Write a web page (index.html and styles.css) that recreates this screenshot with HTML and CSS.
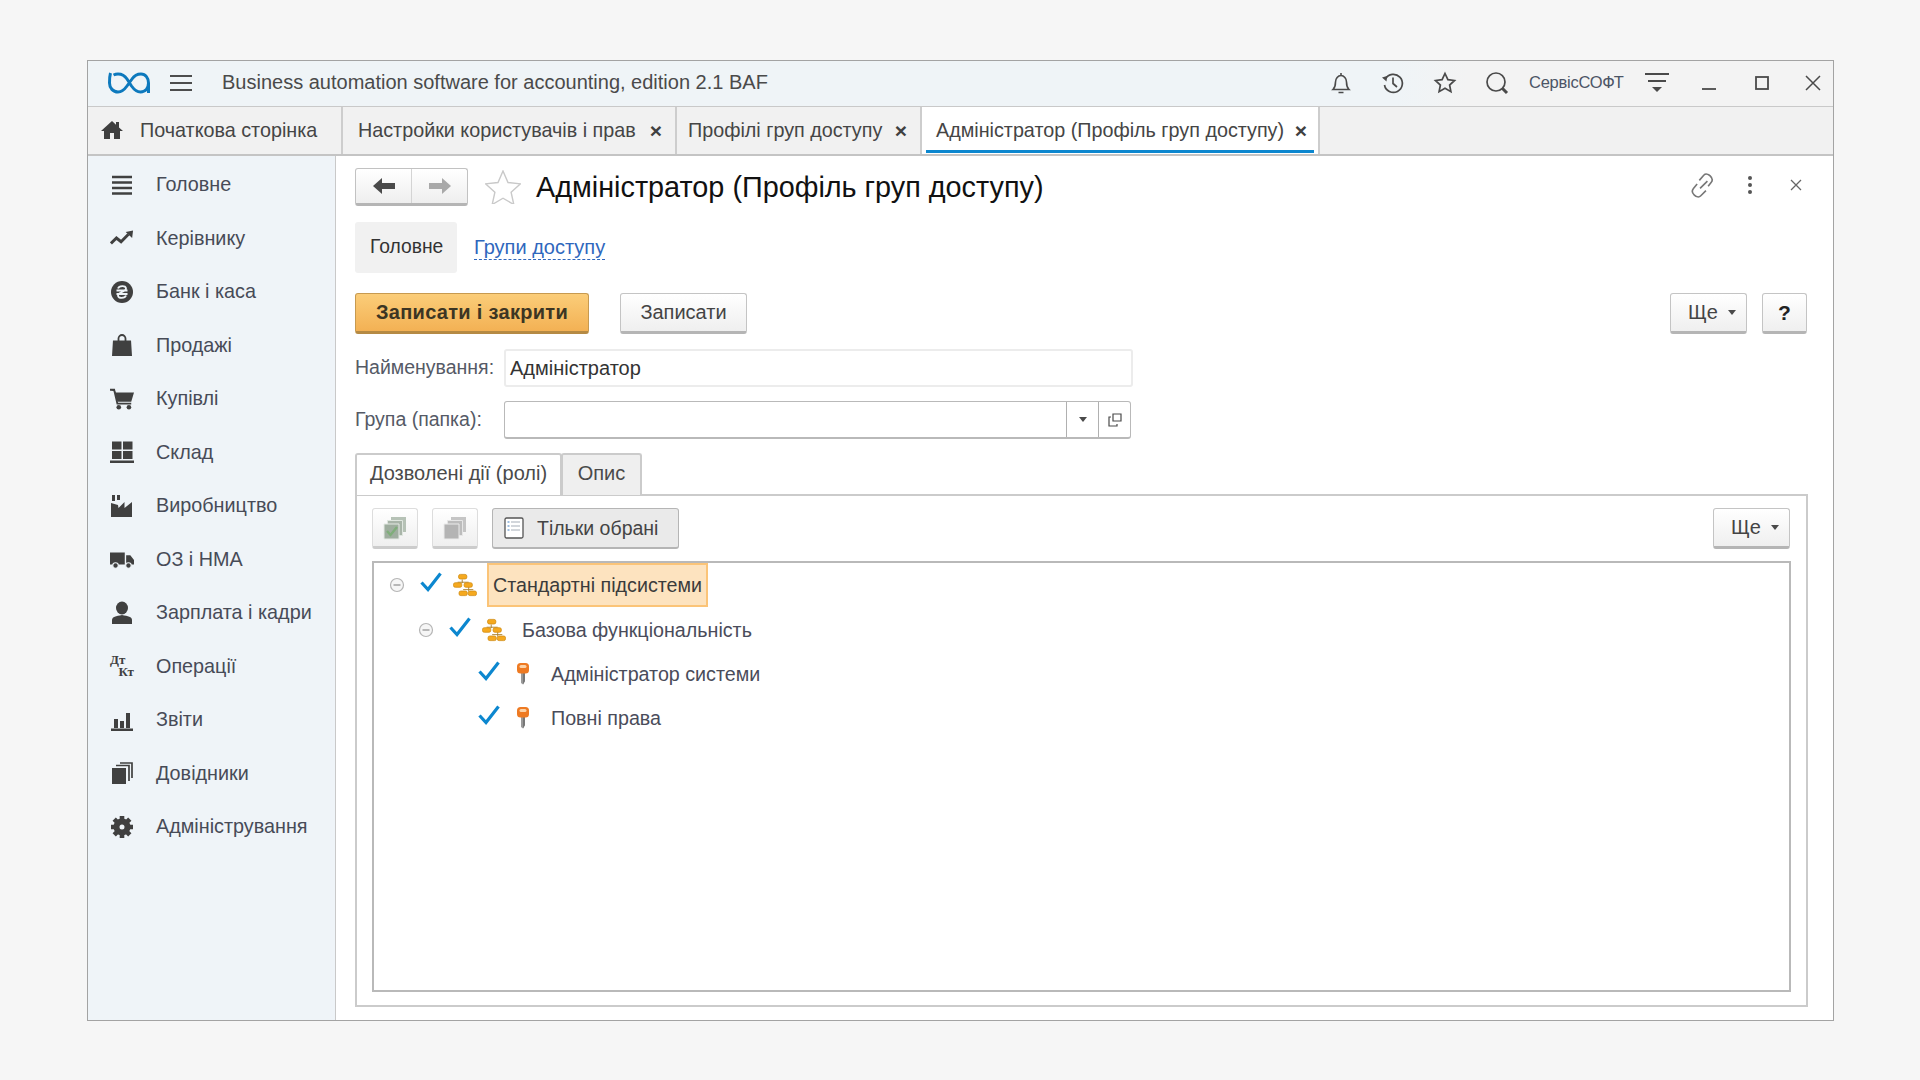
FILE: index.html
```html
<!DOCTYPE html>
<html lang="uk">
<head>
<meta charset="utf-8">
<title>Адміністратор (Профіль груп доступу)</title>
<link rel="stylesheet" href="styles.css">
</head>
<body>
<svg class="defs" width="0" height="0">
  <defs>
    <symbol id="hier" viewBox="0 0 26 24">
      <path d="M10 6v4M5 9h12M17 14v5M11 17h11" fill="none" stroke="#a9802f" stroke-width="1"/>
      <g fill="#f5a91f" stroke="#cf8a10" stroke-width=".8">
        <rect x="6" y="0.500" width="9" height="5" rx="2"/>
        <rect x="0.500" y="9.500" width="9" height="5" rx="2"/>
        <rect x="12" y="9.500" width="9" height="5" rx="2"/>
        <rect x="6.500" y="18.500" width="9" height="5" rx="2"/>
        <rect x="16.500" y="18.500" width="9" height="5" rx="2"/>
      </g>
    </symbol>
    <symbol id="key" viewBox="0 0 14 24">
      <path d="M5 10h4v9l-2 3.500-2-1.500z" fill="#9a9a9a"/>
      <path d="M7 10h2v9l-2 3.500z" fill="#777"/>
      <rect x="1" y="1" width="12" height="10.500" rx="3.500" fill="#ee7a22"/>
      <rect x="3.500" y="3" width="7" height="3" rx="1.500" fill="#fcd3a8"/>
    </symbol>
    <symbol id="check" viewBox="0 0 24 24">
      <path d="M2.500 12.500l6.500 7L21.500 3.500" fill="none" stroke="#0c87cf" stroke-width="3.200"/>
    </symbol>
    <symbol id="minus" viewBox="0 0 16 16">
      <circle cx="8" cy="8" r="6.500" fill="#f6f6f6" stroke="#b5b5b5" stroke-width="1.200"/>
      <path d="M4.500 8h7" stroke="#8e8e8e" stroke-width="1.200"/>
    </symbol>
    <symbol id="caret" viewBox="0 0 8 5">
      <path d="M0 0h8L4 5z" fill="#4a4a4a"/>
    </symbol>
  </defs>
</svg>

<div class="window">
  <header class="titlebar">
    <svg class="logo" viewBox="0 0 42 22" width="42" height="22"><path d="M2.500 1C1.500 4.500 1.500 8 1.500 11c0 5 3.500 9 8.500 9 4 0 6.500-2.500 9-6l5-7c2-3 5-5 9-5 4.500 0 7.500 4 7.500 9s-3 9-8 9c-4 0-6.500-2.500-9-6l-4.500-7c-2-3-5-5-9-5-1.500 0-3 .3-4.500 1M40.500 11v10" fill="none" stroke="#0d79bd" stroke-width="3"/></svg>
    <svg class="burger" viewBox="0 0 22 18" width="22" height="18"><path d="M0 2h22M0 9h22M0 16h22" stroke="#4d4d4d" stroke-width="2"/></svg>
    <span class="app-title">Business automation software for accounting, edition 2.1 BAF</span>
    <div class="tb-icons">
      <svg class="tb-ic" viewBox="0 0 24 24" width="24" height="24"><path d="M4 18.500c2-2 2.500-4 2.500-7.500 0-3.500 2.500-6.500 5.500-6.500s5.500 3 5.500 6.500c0 3.500 .5 5.500 2.500 7.500zM12 4.500V2M9.500 21.500h5" fill="none" stroke="#4a4a4a" stroke-width="1.600"/></svg>
      <svg class="tb-ic" viewBox="0 0 24 24" width="24" height="24"><path d="M4.500 8A9 9 0 1 1 3.500 14M12 6.500v6l4 3.500" fill="none" stroke="#4a4a4a" stroke-width="1.700"/><path d="M1 6.500l5-1.500-.5 5.500z" fill="#4a4a4a"/></svg>
      <svg class="tb-ic" viewBox="0 0 24 24" width="24" height="24"><path d="M12 2.500l2.900 6.200 6.600.8-4.900 4.500 1.300 6.700-5.900-3.400-5.900 3.400 1.300-6.700-4.900-4.500 6.600-.8z" fill="none" stroke="#4a4a4a" stroke-width="1.700"/></svg>
      <svg class="tb-ic" viewBox="0 0 24 24" width="24" height="24"><circle cx="11" cy="11" r="9" fill="none" stroke="#4a4a4a" stroke-width="1.700"/><path d="M17.500 17.500l4.500 4.500" stroke="#4a4a4a" stroke-width="3"/></svg>
    </div>
    <span class="user">СервісСОФТ</span>
    <svg class="tb-filter" viewBox="0 0 24 22" width="24" height="22"><path d="M0 2h24M3 9h18" stroke="#4a4a4a" stroke-width="1.800"/><path d="M7 15h10l-5 5z" fill="#4a4a4a"/></svg>
    <svg class="tb-win min" viewBox="0 0 16 16" width="16" height="16"><path d="M1 14h14" stroke="#4a4a4a" stroke-width="1.800"/></svg>
    <svg class="tb-win max" viewBox="0 0 16 16" width="16" height="16"><rect x="2" y="2" width="12" height="12" fill="none" stroke="#4a4a4a" stroke-width="1.800"/></svg>
    <svg class="tb-win cls" viewBox="0 0 18 18" width="18" height="18"><path d="M2 2l14 14M16 2L2 16" stroke="#4a4a4a" stroke-width="1.500"/></svg>
  </header>

  <nav class="tabbar">
    <div class="apptab home">
      <svg viewBox="0 0 22 20" width="22" height="20"><path d="M11 1L0 11h3v8h6v-6h4v6h6v-8h3l-4-3.600V2h-3v2.700z" fill="#3f3f3f"/></svg>
      <span>Початкова сторінка</span>
    </div>
    <div class="apptab t2"><span>Настройки користувачів і прав</span><b class="x">×</b></div>
    <div class="apptab t3"><span>Профілі груп доступу</span><b class="x">×</b></div>
    <div class="apptab t4 active"><span>Адміністратор (Профіль груп доступу)</span><b class="x">×</b></div>
  </nav>

  <div class="body">
    <aside class="side">
      <a class="nav"><svg viewBox="0 0 24 24"><path d="M2 4h20M2 9.500h20M2 15h20M2 20.500h20" stroke="#404040" stroke-width="2.600"/></svg>Головне</a>
      <a class="nav"><svg viewBox="0 0 26 24"><path d="M1 18l6-6 5 4 8-8" fill="none" stroke="#404040" stroke-width="3.200"/><path d="M17 5.500l8-1.500-1 8z" fill="#404040"/></svg>Керівнику</a>
      <a class="nav"><svg viewBox="0 0 24 24"><circle cx="12" cy="12" r="11" fill="#404040"/><path d="M8 8.500c1-3 8-3.500 8 0 0 3.500-8 3.500-8 7 0 3.500 7 3 8 0M6.500 10.500h11M6.500 14h11" fill="none" stroke="#eff4f8" stroke-width="1.800"/></svg>Банк і каса</a>
      <a class="nav"><svg viewBox="0 0 24 24"><path d="M3 7.500h18l1 15.500H2z" fill="#404040"/><path d="M8.500 11V5.500a3.500 3.500 0 0 1 7 0V11" fill="none" stroke="#404040" stroke-width="1.800"/></svg>Продажі</a>
      <a class="nav"><svg viewBox="0 0 26 24"><path d="M0 2h5l1 3h20l-3 10H8L5 4" fill="#404040"/><path d="M0 2h4.500l3.500 15h15" fill="none" stroke="#404040" stroke-width="2"/><circle cx="9.500" cy="21" r="2.500" fill="#404040"/><circle cx="20.500" cy="21" r="2.500" fill="#404040"/></svg>Купівлі</a>
      <a class="nav"><svg viewBox="0 0 24 24"><path d="M2 1.500h9.500v8H2zM13 1.500h9.500v8H13zM2 11h9.500v8H2zM13 11h9.500v8H13zM0 20.500h24V23H0z" fill="#404040"/></svg>Склад</a>
      <a class="nav"><svg viewBox="0 0 24 24"><path d="M2 1h3v6H2zM7 1h3v5H7zM1 23V9l7 2 .5 3 6-6v6l7.500-6v15z" fill="#404040"/></svg>Виробництво</a>
      <a class="nav"><svg viewBox="0 0 26 24"><path d="M0 5h16v13H0zM17.500 8H22l4 5v5h-8.500z" fill="#404040"/><circle cx="6" cy="19" r="3" fill="#404040" stroke="#eff4f8" stroke-width="1.200"/><circle cx="20" cy="19" r="3" fill="#404040" stroke="#eff4f8" stroke-width="1.200"/></svg>ОЗ і НМА</a>
      <a class="nav"><svg viewBox="0 0 24 24"><ellipse cx="12" cy="7" rx="6" ry="6.500" fill="#404040"/><path d="M2 23v-4c0-3 4-4 10-5 6 1 10 2 10 5v4z" fill="#404040"/></svg>Зарплата і кадри</a>
      <a class="nav"><span class="dtkt"><i>Дт</i><i>Кт</i></span>Операції</a>
      <a class="nav"><svg viewBox="0 0 24 24"><path d="M4 11h4v9H4zM10 13h4v7h-4zM16 5h4v15h-4zM1 20.500h22V23H1z" fill="#404040"/></svg>Звіти</a>
      <a class="nav"><svg viewBox="0 0 24 24"><path d="M2 7h14v16H2z" fill="#404040"/><path d="M6 4.500h13V20M10 2h12v15" fill="none" stroke="#404040" stroke-width="1.700"/></svg>Довідники</a>
      <a class="nav"><svg viewBox="0 0 24 24"><path d="M12 6.500a5.500 5.500 0 1 0 0 11 5.500 5.500 0 0 0 0-11z" fill="none" stroke="#404040" stroke-width="6"/><path d="M12 1v4M12 19v4M1 12h4M19 12h4M4.200 4.200l3 3M16.800 16.800l3 3M19.800 4.200l-3 3M7.200 16.800l-3 3" stroke="#404040" stroke-width="4.600"/></svg>Адміністрування</a>
    </aside>

    <main class="content">
      <div class="form-head">
        <div class="navbtns">
          <span class="navbtn"><svg viewBox="0 0 22 16" width="22" height="16"><path d="M9 0v5h13v6H9v5L0 8z" fill="#4a4a4a"/></svg></span>
          <span class="navbtn"><svg viewBox="0 0 22 16" width="22" height="16"><path d="M13 0v5H0v6h13v5l9-8z" fill="#a9a9a9"/></svg></span>
        </div>
        <svg class="bigstar" viewBox="0 0 36 34" width="36" height="34"><path d="M18 1l5 11.500 12.500 1.300-9.400 8.400 2.700 12.300L18 28.200 7.200 34.500l2.700-12.300L.5 13.800 13 12.500z" fill="#fff" stroke="#c9c9c9" stroke-width="1.400"/></svg>
        <h1 class="title">Адміністратор (Профіль груп доступу)</h1>
        <div class="head-ic">
          <svg viewBox="4 3.500 16 17" width="24" height="25"><path d="M10 14l5-5M9.500 8.500l3-3.500c2.500-2.500 7.500 2 5 5l-2 2.500M14 15.500l-3.500 3.500c-2.500 2.500-7.500-2-5-5l2.500-3" fill="none" stroke="#777" stroke-width="1.100"/></svg>
          <svg class="dots" viewBox="0 0 6 20" width="6" height="20"><circle cx="3" cy="3" r="2" fill="#555"/><circle cx="3" cy="10" r="2" fill="#555"/><circle cx="3" cy="17" r="2" fill="#555"/></svg>
          <svg class="hx" viewBox="0 0 12 12" width="12" height="12"><path d="M1 1l10 10M11 1L1 11" stroke="#666" stroke-width="1.300"/></svg>
        </div>
      </div>

      <div class="form-tabs">
        <span class="ftab on">Головне</span>
        <a class="ftab link">Групи доступу</a>
      </div>

      <div class="cmdbar">
        <button class="btn primary">Записати і закрити</button>
        <button class="btn save">Записати</button>
        <span class="spacer"></span>
        <button class="btn more">Ще <svg width="8" height="5"><use href="#caret"/></svg></button>
        <button class="btn help">?</button>
      </div>

      <div class="field">
        <label>Найменування:</label>
        <div class="input soft">Адміністратор</div>
      </div>
      <div class="field second">
        <label>Група (папка):</label>
        <div class="input combo">
          <span class="combo-v"></span>
          <span class="combo-b"><svg width="8" height="5"><use href="#caret"/></svg></span>
          <span class="combo-b copy"><svg viewBox="0 0 14 14" width="14" height="14"><path d="M5 1h8v7H5zM3 4H1v9h8v-2" fill="none" stroke="#4a4a4a" stroke-width="1.200"/></svg></span>
        </div>
      </div>

      <div class="page-tabs">
        <span class="ptab sel">Дозволені дії (ролі)</span>
        <span class="ptab">Опис</span>
      </div>

      <section class="panel">
        <div class="toolbar">
          <button class="tbtn"><svg viewBox="0 0 26 26" width="26" height="26"><path d="M9 2h15v15H9z" fill="#b6c2b6"/><path d="M5.500 5.500h15v15h-15z" fill="#a9b5a9" stroke="#dfe6df"/><path d="M2 9h15v15H2z" fill="#9fae9f" stroke="#e4e9e4"/><path d="M5 16l3.500 4L15 12" fill="none" stroke="#7fae7a" stroke-width="2.400"/></svg></button>
          <button class="tbtn"><svg viewBox="0 0 26 26" width="26" height="26"><path d="M9 2h15v15H9z" fill="#c5c5c5"/><path d="M5.500 5.500h15v15h-15z" fill="#bdbdbd" stroke="#e6e6e6"/><path d="M2 9h15v15H2z" fill="#b4b4b4" stroke="#ebebeb"/></svg></button>
          <button class="tbtn toggle"><svg viewBox="0 0 20 22" width="20" height="22"><rect x="1" y="1" width="18" height="20" rx="1.500" fill="#fff" stroke="#555" stroke-width="1.300"/><path d="M3.500 5h2M3.500 9h2M3.500 13h2" stroke="#7fa9d6" stroke-width="1.500"/><path d="M7 5h9M7 9h9M7 13h9" stroke="#c3c9d0" stroke-width="1.500"/></svg><span>Тільки обрані</span></button>
          <span class="spacer"></span>
          <button class="btn more">Ще <svg width="8" height="5"><use href="#caret"/></svg></button>
        </div>
        <div class="tree">
          <div class="row">
            <svg class="r-exp"><use href="#minus"/></svg>
            <svg class="r-chk"><use href="#check"/></svg>
            <svg class="r-ic"><use href="#hier"/></svg>
            <span class="cell current">Стандартні підсистеми</span>
          </div>
          <div class="row lvl1">
            <svg class="r-exp"><use href="#minus"/></svg>
            <svg class="r-chk"><use href="#check"/></svg>
            <svg class="r-ic"><use href="#hier"/></svg>
            <span class="cell">Базова функціональність</span>
          </div>
          <div class="row lvl2">
            <span class="r-exp"></span>
            <svg class="r-chk"><use href="#check"/></svg>
            <svg class="r-ic"><use href="#key"/></svg>
            <span class="cell">Адміністратор системи</span>
          </div>
          <div class="row lvl2">
            <span class="r-exp"></span>
            <svg class="r-chk"><use href="#check"/></svg>
            <svg class="r-ic"><use href="#key"/></svg>
            <span class="cell">Повні права</span>
          </div>
        </div>
      </section>
    </main>
  </div>
</div>
</body>
</html>
```
FILE: styles.css
```css
* { box-sizing: border-box; }
html, body { margin: 0; height: 100%; }
body {
  background: #f6f6f6;
  padding: 60px 86px 59px 87px;
  font-family: "Liberation Sans", Arial, sans-serif;
  font-size: 20px;
  color: #454545;
  overflow: hidden;
}
.defs { position: absolute; }
.window {
  height: 961px;
  background: #fff;
  border: 1px solid #a3a3a3;
  display: flex;
  flex-direction: column;
}

/* title bar */
.titlebar {
  height: 46px;
  flex: none;
  display: flex;
  align-items: center;
  background: linear-gradient(90deg, #eff4f7 0, #eff4f7 75%, #f3f3f3 79%);
  padding-left: 20px;
  padding-bottom: 2px;
  border-bottom: 1px solid #c9c9c9;
}
.logo { flex: none; }
.burger { flex: none; margin-left: 20px; }
.app-title { margin-left: 30px; white-space: nowrap; color: #4a4a4a; }
.tb-icons { margin-left: auto; display: flex; gap: 28px; align-items: center; }
.tb-ic { display: block; }
.user { margin-left: 20px; font-size: 16.500px; letter-spacing: -.25px; width: 96px; white-space: nowrap; color: #4c5566; }
.tb-filter { margin-left: 20px; }
.tb-win { flex: none; }
.min { margin-left: 32px; }
.max { margin-left: 37px; }
.cls { margin-left: 34px; margin-right: 11px; }

/* app tabs */
.tabbar {
  height: 49px;
  flex: none;
  display: flex;
  background: #f1f1f1;
  border-bottom: 2px solid #c4c4c4;
  font-size: 19.750px;
}
.apptab {
  display: flex;
  align-items: center;
  border-right: 2px solid #cdcdcd;
  white-space: nowrap;
  position: relative;
  padding-bottom: 1px;
}
.home { width: 255px; padding-left: 13px; gap: 17px; }
.t2 { width: 334px; padding-left: 15px; }
.t3 { width: 245px; padding-left: 11px; }
.t4 { width: 398px; padding-left: 14px; background: #fff; }
.x { margin-left: auto; margin-right: 13px; font-size: 21px; line-height: 1; color: #404040; }
.t4 .x { margin-right: 11px; }
.active::after {
  content: "";
  position: absolute;
  left: 4px;
  right: 4px;
  bottom: 1px;
  height: 3px;
  background: #0c87cf;
}

/* body */
.body { flex: 1; display: flex; min-height: 0; }
.side {
  width: 248px;
  flex: none;
  background: #eff4f8;
  border-right: 1px solid #c9c9c9;
  padding-top: 2px;
}
.nav {
  height: 53.500px;
  display: flex;
  align-items: center;
  padding-left: 22px;
  gap: 22px;
  font-size: 19.800px;
  color: #474b57;
  white-space: nowrap;
}
.nav svg { width: 24px; height: 24px; flex: none; }
.dtkt {
  width: 24px;
  height: 25px;
  flex: none;
  display: flex;
  flex-direction: column;
  font: bold 13px/12px "Liberation Serif", serif;
  color: #404040;
}
.dtkt i { font-style: normal; }
.dtkt i + i { align-self: flex-end; }

/* content */
.content {
  flex: 1;
  min-width: 0;
  display: flex;
  flex-direction: column;
  padding: 12px 25px 13px 19px;
}
.form-head { height: 38px; flex: none; display: flex; align-items: center; margin-bottom: 16px; }
.navbtns {
  width: 113px;
  height: 38px;
  display: flex;
  border: 1px solid #c2c2c2;
  border-bottom: 3px solid #b5b5b5;
  border-radius: 3px;
  background: linear-gradient(#fff, #eeeeee);
}
.navbtn { flex: 1; display: flex; align-items: center; justify-content: center; }
.navbtn + .navbtn { border-left: 1px solid #d4d4d4; }
.bigstar { margin-left: 17px; flex: none; }
.title { margin: 0 0 0 15px; font-size: 28.800px; font-weight: 400; color: #111; white-space: nowrap; }
.head-ic { margin-left: auto; display: flex; align-items: center; margin-right: 6px; margin-bottom: 4px; }
.dots { margin-left: 32px; }
.hx { margin-left: 37px; }

.form-tabs { height: 51px; flex: none; display: flex; align-items: center; margin-bottom: 20px; }
.ftab { height: 51px; line-height: 50px; padding: 0 15px; white-space: nowrap; font-size: 19.300px; }
.on { background: #f1f1f1; border-radius: 3px; width: 102px; color: #333; }
.link { color: #2f67bd; padding: 0; margin-left: 17px; line-height: 1.2; height: auto; font-size: 20px; border-bottom: 1px dashed #2f67bd; }

.cmdbar { height: 41px; flex: none; display: flex; align-items: stretch; margin-bottom: 15px; }
.btn, .tbtn {
  font: inherit;
  color: #444;
  border: 1px solid #c4c4c4;
  border-bottom: 3px solid #b5b5b5;
  border-radius: 3px;
  background: linear-gradient(#fff, #efefef);
  padding: 0;
}
.primary {
  width: 234px;
  font-weight: 700;
  letter-spacing: .3px;
  color: #3c3523;
  background: linear-gradient(#fbcd79, #f3b154);
  border-color: #c79a50 #c79a50 #b58a44;
}
.save { width: 127px; margin-left: 31px; }
.spacer { flex: 1; }
.more { width: 77px; display: flex; align-items: center; justify-content: center; gap: 10px; padding-left: 7px; }
.help { width: 45px; margin-left: 15px; margin-right: 1px; font-weight: 700; color: #222; font-size: 21px; }

.field { height: 38px; flex: none; display: flex; margin-bottom: 14px; }
.field label { width: 149px; flex: none; line-height: 36px; white-space: nowrap; color: #555a66; font-size: 19.500px; }
.input {
  border-radius: 3px;
  width: 629px;
  line-height: 34px;
  padding-left: 4px;
  color: #333;
}
.soft { border: 2px solid #ececec; }
.combo { width: 627px; display: flex; padding: 0; border: 1px solid #b9b9b9; border-bottom-width: 2px; }
.combo-v { flex: 1; }
.combo-b { width: 32px; display: flex; align-items: center; justify-content: center; border-left: 1px solid #b0b0b0; }

.page-tabs { height: 41px; flex: none; display: flex; }
.ptab {
  height: 42px;
  border: 2px solid #cbcbcb;
  border-bottom: 0;
  border-radius: 3px 3px 0 0;
  background: #efefef;
  line-height: 36px;
  width: 81px;
  text-align: center;
  white-space: nowrap;
  color: #4a4a4a;
  position: relative;
  margin-bottom: -1px;
}
.ptab.sel { width: 207px; background: #fff; margin-right: -1px; z-index: 1; }

.panel {
  flex: 1;
  min-height: 0;
  border: 2px solid #cbcbcb;
  padding: 12px 15px 13px;
  display: flex;
  flex-direction: column;
}
.toolbar { height: 41px; flex: none; display: flex; align-items: stretch; gap: 14px; margin-bottom: 12px; }
.toolbar .more { margin-right: 1px; }
.tbtn { width: 46px; display: flex; align-items: center; justify-content: center; border-color: #ddd; border-bottom-color: #ccc; opacity: 1; }
.toggle {
  width: 187px;
  justify-content: flex-start;
  padding-left: 11px;
  gap: 13px;
  font-size: 19.500px;
  background: #eaeaea;
  border: 1px solid #b5b5b5;
  border-bottom-width: 2px;
}
.toolbar .spacer { margin: 0 -14px; }

.tree { flex: 1; min-height: 0; border: 2px solid #b9b9b9; border-bottom-width: 2px; padding: 0 0 0 15px; }
.row { height: 44.400px; display: flex; align-items: center; }
.lvl1 { padding-left: 29px; }
.lvl2 { padding-left: 58px; }
.r-exp { width: 16px; height: 16px; flex: none; }
.r-chk { width: 24px; height: 24px; flex: none; margin-left: 14px; margin-top: -6px; }
.r-ic { width: 24px; height: 24px; flex: none; margin-left: 10px; }
.cell { margin-left: 10px; padding: 0 6px; line-height: 44px; height: 44px; white-space: nowrap; color: #4a4c5a; font-size: 19.700px; }
.current {
  background: #fde3bf;
  border: 2px solid #fbc478;
  line-height: 40px;
  padding: 0 4px;
  width: 221px;
  color: #3b3b3b;
}
```
